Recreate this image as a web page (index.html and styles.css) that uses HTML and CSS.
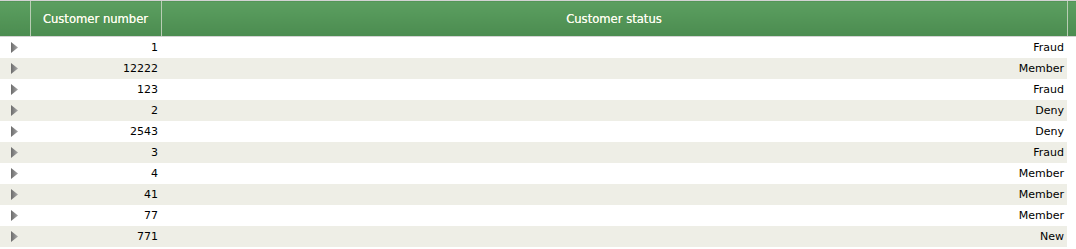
FILE: index.html
```html
<!DOCTYPE html>
<html>
<head>
<meta charset="utf-8">
<link rel="stylesheet" href="styles.css">
</head>
<body>
<table class="grid">
  <colgroup>
    <col class="c-exp"><col class="c-num"><col class="c-status"><col class="c-gutter">
  </colgroup>
  <thead>
    <tr>
      <th></th><th>Customer number</th><th>Customer status</th><th></th>
    </tr>
  </thead>
  <tbody>
    <tr><td class="exp"><span class="tri"></span></td><td>1</td><td>Fraud</td><td class="gut"></td></tr>
    <tr class="alt"><td class="exp"><span class="tri"></span></td><td>12222</td><td>Member</td><td class="gut"></td></tr>
    <tr><td class="exp"><span class="tri"></span></td><td>123</td><td>Fraud</td><td class="gut"></td></tr>
    <tr class="alt"><td class="exp"><span class="tri"></span></td><td>2</td><td>Deny</td><td class="gut"></td></tr>
    <tr><td class="exp"><span class="tri"></span></td><td>2543</td><td>Deny</td><td class="gut"></td></tr>
    <tr class="alt"><td class="exp"><span class="tri"></span></td><td>3</td><td>Fraud</td><td class="gut"></td></tr>
    <tr><td class="exp"><span class="tri"></span></td><td>4</td><td>Member</td><td class="gut"></td></tr>
    <tr class="alt"><td class="exp"><span class="tri"></span></td><td>41</td><td>Member</td><td class="gut"></td></tr>
    <tr><td class="exp"><span class="tri"></span></td><td>77</td><td>Member</td><td class="gut"></td></tr>
    <tr class="alt"><td class="exp"><span class="tri"></span></td><td>771</td><td>New</td><td class="gut"></td></tr>
  </tbody>
</table>
</body>
</html>
```
FILE: styles.css
```css
html, body {
  margin: 0;
  padding: 0;
  background: #ffffff;
}
.grid {
  width: 1076px;
  table-layout: fixed;
  border-collapse: collapse;
  font-family: "DejaVu Sans", Verdana, sans-serif;
  font-size: 11px;
  color: #000;
}
.c-exp { width: 30px; }
.c-num { width: 131px; }
.c-gutter { width: 9px; }
.grid thead th {
  height: 35px;
  padding: 0;
  background: linear-gradient(to bottom, #5c9f60 0%, #4b8c50 100%);
  color: #fbfbee;
  font-weight: normal;
  font-size: 11.6px;
  text-align: center;
  border-top: 1px solid #d3d3d3;
  border-bottom: 1px solid #d3d3d3;
  border-left: 1px solid #b9cdb4;
  text-shadow: 0 0 0.4px #fbfbee;
}
.grid thead th:first-child { border-left: none; }
.grid tbody td {
  height: 21px;
  padding: 0 3px 0 0;
  text-align: right;
  vertical-align: middle;
  line-height: 21px;
}
.grid tbody tr.alt td { background: #eeeee6; }
.grid tbody tr td.gut { background: #ffffff; }
.grid tbody td.exp {
  text-align: left;
  padding: 0 0 0 11px;
}
.tri {
  display: block;
  width: 7px;
  height: 11px;
  background: linear-gradient(to right, #6c6c6c, #a8a8a8);
  clip-path: polygon(0 0, 100% 50%, 0 100%);
}
```
